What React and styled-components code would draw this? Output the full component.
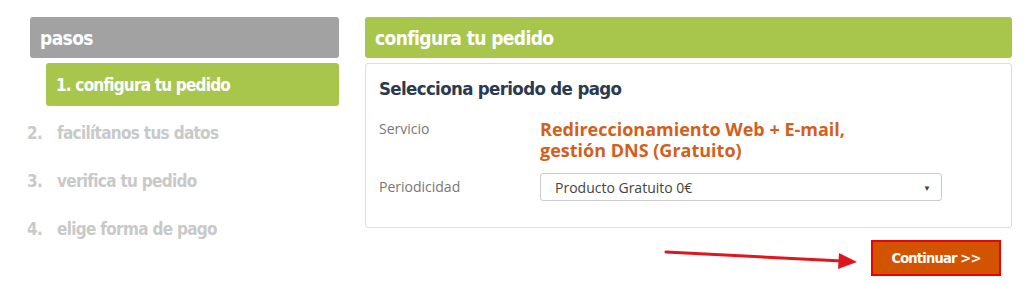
import React from "react";
import styled, { createGlobalStyle } from "styled-components";

const COLORS = {
  green: "#a8c64c",
  gray: "#a2a2a2",
  stepGray: "#c9c9c9",
  navy: "#2c3a4f",
  orange: "#d2601c",
  label: "#777777",
  border: "#dddddd",
};

const CONDENSED = `"DejaVu Sans Condensed", "DejaVu Sans", sans-serif`;

const GlobalStyle = createGlobalStyle`
  body {
    margin: 0;
    background: #ffffff;
    font-family: "Open Sans", sans-serif;
  }
`;

const Page = styled.div`
  display: flex;
  gap: 26px;
  padding: 17px 12px 0 30px;
  width: 1024px;
  height: 284px;
  box-sizing: border-box;
`;

const Sidebar = styled.div`
  width: 309px;
  display: flex;
  flex-direction: column;
`;

const Header = styled.div`
  height: 41px;
  display: flex;
  align-items: center;
  padding-left: 10px;
  border-radius: 3px;
  background: ${({ $bg }) => $bg};
  color: #ffffff;
  font-family: ${CONDENSED};
  font-weight: 700;
  font-size: 19px;
  letter-spacing: -0.6px;
`;

const ActiveStep = styled.div`
  margin: 5px 0 0 16px;
  height: 43px;
  display: flex;
  align-items: center;
  padding-left: 10px;
  border-radius: 3px;
  background: ${COLORS.green};
  color: #ffffff;
  font-family: ${CONDENSED};
  font-weight: 700;
  font-size: 17px;
  letter-spacing: -0.8px;
`;

const StepList = styled.ol`
  list-style: none;
  margin: 3px 0 0 -3px;
  padding: 0;
`;

const Step = styled.li`
  height: 48px;
  display: flex;
  align-items: center;
  color: ${COLORS.stepGray};
  font-family: ${CONDENSED};
  font-weight: 700;
  font-size: 17px;
  letter-spacing: -0.7px;
`;

const StepNum = styled.span`
  width: 30px;
`;

const Main = styled.div`
  width: 647px;
  display: flex;
  flex-direction: column;
`;

const Card = styled.div`
  margin-top: 5px;
  height: 165px;
  box-sizing: border-box;
  border: 1px solid ${COLORS.border};
  border-radius: 3px;
  padding: 13px 13px 0;
`;

const Title = styled.h2`
  margin: 0;
  line-height: 24px;
  color: ${COLORS.navy};
  font-family: ${CONDENSED};
  font-weight: 700;
  font-size: 18.5px;
  letter-spacing: -0.65px;
`;

const Row = styled.div`
  display: grid;
  grid-template-columns: 161px 1fr;
  align-items: ${({ $center }) => ($center ? "center" : "start")};
  margin-top: ${({ $top }) => $top}px;
`;

const Label = styled.div`
  color: ${COLORS.label};
  font-size: 14px;
  line-height: 20px;
`;

const Value = styled.div`
  color: ${COLORS.orange};
  font-weight: 700;
  font-size: 18px;
  line-height: 21px;
`;

const Select = styled.div`
  width: 402px;
  height: 28px;
  box-sizing: border-box;
  border: 1px solid #cccccc;
  border-radius: 3px;
  display: flex;
  align-items: center;
  justify-content: space-between;
  padding: 0 10px 0 14px;
  color: #444444;
  font-size: 14px;
`;

const Caret = styled.span`
  font-size: 8px;
  color: #444444;
`;

const Actions = styled.div`
  margin-top: 12px;
  display: flex;
  justify-content: flex-end;
  align-items: center;
  gap: 12px;
  padding-right: 11px;
`;

const Button = styled.button`
  width: 130px;
  height: 36px;
  border: 2px solid #ee0000;
  background: #d35400;
  color: #ffffff;
  font-family: ${CONDENSED};
  font-weight: 700;
  font-size: 14.5px;
  letter-spacing: -0.8px;
  cursor: pointer;
`;

const Arrow = () => (
  <svg width="195" height="22" viewBox="0 0 195 22">
    <line x1="2" y1="5" x2="178" y2="14" stroke="#e0161e" strokeWidth="3" strokeLinecap="round" />
    <polygon points="175,6 193,15 174,22" fill="#e0161e" />
  </svg>
);

const steps = ["facilítanos tus datos", "verifica tu pedido", "elige forma de pago"];

export default function App() {
  return (
    <>
      <GlobalStyle />
      <Page>
        <Sidebar>
          <Header $bg={COLORS.gray}>pasos</Header>
          <ActiveStep>1. configura tu pedido</ActiveStep>
          <StepList>
            {steps.map((s, i) => (
              <Step key={s}>
                <StepNum>{i + 2}.</StepNum>
                {s}
              </Step>
            ))}
          </StepList>
        </Sidebar>
        <Main>
          <Header $bg={COLORS.green}>configura tu pedido</Header>
          <Card>
            <Title>Selecciona periodo de pago</Title>
            <Row $top={18}>
              <Label>Servicio</Label>
              <Value>
                Redireccionamiento Web + E-mail,
                <br />
                gestión DNS (Gratuito)
              </Value>
            </Row>
            <Row $top={12} $center>
              <Label>Periodicidad</Label>
              <Select>
                Producto Gratuito 0€
                <Caret>▼</Caret>
              </Select>
            </Row>
          </Card>
          <Actions>
            <Arrow />
            <Button>Continuar &gt;&gt;</Button>
          </Actions>
        </Main>
      </Page>
    </>
  );
}
